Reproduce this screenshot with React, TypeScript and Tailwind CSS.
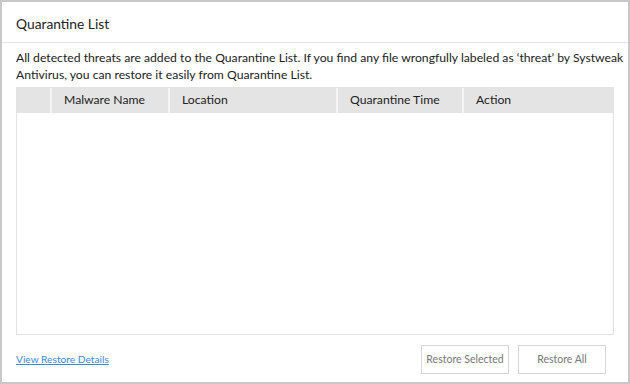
import React from 'react';

const cols = [
  { label: '', w: 'w-[33px]' },
  { label: 'Malware Name', w: 'w-[118px]' },
  { label: 'Location', w: 'w-[168px]' },
  { label: 'Quarantine Time', w: 'w-[126px]' },
  { label: 'Action', w: 'flex-1' },
];

export default function App() {
  return (
    <div
      className="w-[630px] h-[384px] bg-white border-2 border-[#c8c8c8] flex flex-col text-[#333]"
      style={{ fontFamily: 'Lato, "Noto Sans", sans-serif' }}
    >
      <div className="h-[41px] border-b border-[#e3e3e3] flex items-center pt-[4px] px-[14px] text-[13.8px] text-[#222]">
        Quarantine List
      </div>

      <div className="px-[14px] flex flex-col flex-1">
        <p className="mt-[6px] text-[12.2px] leading-[17px] text-[#222] whitespace-nowrap">
          All detected threats are added to the Quarantine List. If you find any file wrongfully labeled as ‘threat’ by Systweak
          <br />
          Antivirus, you can restore it easily from Quarantine List.
        </p>

        <div className="mt-[4px] h-[248px] border border-[#e3e3e3] flex flex-col">
          <div className="h-[25px] bg-[#e4e4e4] flex">
            {cols.map((c, i) => (
              <div
                key={i}
                className={`${c.w} flex items-center pl-[12px] text-[12.2px] text-[#222] ${i > 0 ? 'border-l-2 border-[#f4f4f4]' : ''}`}
              >
                {c.label}
              </div>
            ))}
          </div>
          <div className="flex-1 bg-white" />
        </div>

        <div className="flex items-center justify-between mt-[10px] pr-[8px]">
          <a href="#" className="text-[10.2px] text-[#3b8ad8] underline">
            View Restore Details
          </a>
          <div className="flex gap-[9px]">
            <button className="w-[88px] h-[29px] border border-[#d6d6d6] bg-white text-[10.5px] text-[#777]">
              Restore Selected
            </button>
            <button className="w-[88px] h-[29px] border border-[#d6d6d6] bg-white text-[10.5px] text-[#777]">
              Restore All
            </button>
          </div>
        </div>
      </div>
    </div>
  );
}
